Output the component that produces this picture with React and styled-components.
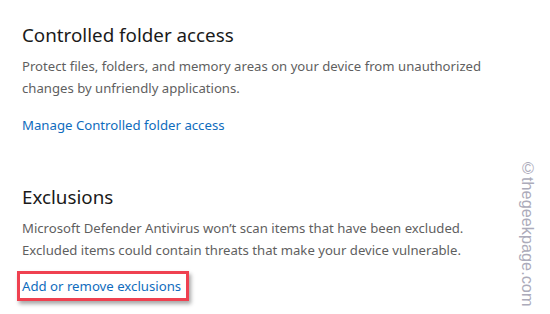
import React from 'react';
import styled, { createGlobalStyle } from 'styled-components';

const GlobalStyle = createGlobalStyle`
  html, body {
    margin: 0;
    padding: 0;
    background: #ffffff;
  }
  body {
    font-family: 'Noto Sans', 'Open Sans', sans-serif;
  }
`;

const Page = styled.div`
  position: relative;
  width: 550px;
  height: 314px;
  overflow: hidden;
  background: #ffffff;
  padding: 21px 0 0 22px;
  box-sizing: border-box;
  display: flex;
  flex-direction: column;
`;

const Section = styled.section`
  display: flex;
  flex-direction: column;
  margin-bottom: ${(p) => p.gap || 0}px;
`;

const Title = styled.h2`
  margin: 0;
  font-size: 18.8px;
  font-weight: 400;
  line-height: 28px;
  color: #1a1a1a;
`;

const Description = styled.p`
  margin: 6px 0 0;
  font-size: 13.15px;
  line-height: 22px;
  color: #5f5f5f;
`;

const LinkRow = styled.div`
  margin-top: ${(p) => p.top || 14}px;
  display: flex;
`;

const Link = styled.a`
  font-size: 13.2px;
  line-height: 20px;
  color: #0f6cbd;
  text-decoration: none;
  cursor: pointer;
  padding: ${(p) => (p.highlighted ? '2px 5px 2px 2px' : '0')};
  margin-left: ${(p) => (p.highlighted ? '-5px' : '0')};
  border: ${(p) => (p.highlighted ? '3px solid #ef4150' : 'none')};
  box-shadow: ${(p) => (p.highlighted ? '2px 3px 4px rgba(0,0,0,0.35)' : 'none')};
`;

const Watermark = styled.div`
  position: absolute;
  right: 13px;
  top: 159px;
  writing-mode: vertical-rl;
  font-family: 'Liberation Sans', Arial, sans-serif;
  font-size: 16.3px;
  color: #acabba;
`;

export default function App() {
  return (
    <>
      <GlobalStyle />
      <Page>
        <Section gap={48}>
          <Title>Controlled folder access</Title>
          <Description>
            Protect files, folders, and memory areas on your device from unauthorized
            <br />
            changes by unfriendly applications.
          </Description>
          <LinkRow top={16}>
            <Link>Manage Controlled folder access</Link>
          </LinkRow>
        </Section>
        <Section>
          <Title>Exclusions</Title>
          <Description>
            Microsoft Defender Antivirus won’t scan items that have been excluded.
            <br />
            Excluded items could contain threats that make your device vulnerable.
          </Description>
          <LinkRow top={10}>
            <Link highlighted>Add or remove exclusions</Link>
          </LinkRow>
        </Section>
        <Watermark>©thegeekpage.com</Watermark>
      </Page>
    </>
  );
}
